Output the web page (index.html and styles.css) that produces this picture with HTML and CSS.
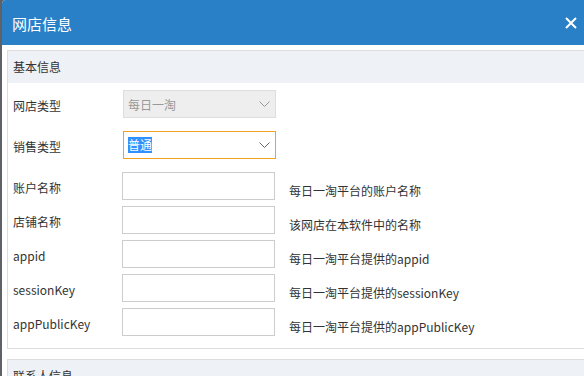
FILE: index.html
```html
<!DOCTYPE html>
<html lang="zh-CN">
<head>
    <meta charset="UTF-8">
    <title>网店信息</title>
    <link rel="stylesheet" href="styles.css">
</head>
<body>
    <div class="dialog">
        <div class="dialog-header">
            <h1>网店信息</h1>
            <span class="close">
                <svg width="12" height="12" viewBox="0 0 12 12">
                    <path d="M1 1 L11 11 M11 1 L1 11" stroke="#fff" stroke-width="2" fill="none"/>
                </svg>
            </span>
        </div>
        <div class="dialog-body">
            <div class="panel">
                <div class="panel-title">基本信息</div>
                <div class="panel-body">
                    <div class="row row-select">
                        <label>网店类型</label>
                        <div class="combo disabled">
                            <span>每日一淘</span>
                            <svg class="arrow" width="11" height="7" viewBox="0 0 11 7">
                                <path d="M0.5 0.5 L5.5 5.5 L10.5 0.5" stroke="#999" stroke-width="1" fill="none"/>
                            </svg>
                        </div>
                    </div>
                    <div class="row row-select">
                        <label>销售类型</label>
                        <div class="combo focused">
                            <span class="selected">普通</span>
                            <svg class="arrow" width="11" height="7" viewBox="0 0 11 7">
                                <path d="M0.5 0.5 L5.5 5.5 L10.5 0.5" stroke="#666" stroke-width="1" fill="none"/>
                            </svg>
                        </div>
                    </div>
                    <div class="row">
                        <label>账户名称</label>
                        <input type="text">
                        <span class="hint">每日一淘平台的账户名称</span>
                    </div>
                    <div class="row">
                        <label>店铺名称</label>
                        <input type="text">
                        <span class="hint">该网店在本软件中的名称</span>
                    </div>
                    <div class="row">
                        <label>appid</label>
                        <input type="text">
                        <span class="hint">每日一淘平台提供的appid</span>
                    </div>
                    <div class="row">
                        <label>sessionKey</label>
                        <input type="text">
                        <span class="hint">每日一淘平台提供的sessionKey</span>
                    </div>
                    <div class="row">
                        <label>appPublicKey</label>
                        <input type="text">
                        <span class="hint">每日一淘平台提供的appPublicKey</span>
                    </div>
                </div>
            </div>
            <div class="panel">
                <div class="panel-title">联系人信息</div>
            </div>
        </div>
    </div>
</body>
</html>
```

FILE: styles.css
```css
* {
    margin: 0;
    padding: 0;
    box-sizing: border-box;
}

body {
    background: #5e6166;
    font-family: "Noto Sans CJK SC", "Noto Sans", sans-serif;
    font-size: 12px;
    color: #333;
    overflow: hidden;
    height: 376px;
}

.dialog {
    margin-left: 2px;
    background: #fff;
    border-top-left-radius: 4px;
    height: 376px;
    overflow: hidden;
}

.dialog-header {
    background: #2a80c6;
    height: 45px;
    display: flex;
    align-items: center;
    justify-content: space-between;
    padding: 2px 7px 0 10px;
    color: #fff;
}

.dialog-header h1 {
    font-size: 15px;
    font-weight: normal;
}

.close {
    display: flex;
    margin-top: -2px;
}

.dialog-body {
    padding: 5px 0 0 5px;
}

.panel {
    border: 1px solid #ddd;
    margin-right: -10px;
    margin-bottom: 10px;
}

.panel-title {
    background: #eef1f5;
    height: 32px;
    line-height: 32px;
    padding-left: 5px;
    font-size: 12px;
}

.panel-body {
    padding: 7px 0 12px 5px;
}

.row {
    display: flex;
    align-items: center;
    height: 28px;
    margin-bottom: 6px;
}

.row:last-child {
    margin-bottom: 0;
}

.row-select {
    margin-bottom: 13px;
}

.row label {
    width: 109px;
    margin-top: 3px;
}

.combo {
    width: 153px;
    height: 28px;
    margin-left: 1px;
    display: flex;
    align-items: center;
    justify-content: space-between;
    padding: 0 4px 0 4px;
}

.combo.disabled {
    background: #eee;
    border: 1px solid #ddd;
    color: #999;
}

.combo.focused {
    border: 1px solid #f0a222;
}

.combo .arrow {
    margin-right: 1px;
    margin-top: 1px;
}

.selected {
    background: #3390ff;
    color: #fff;
    line-height: 16px;
}

.row input {
    width: 153px;
    height: 28px;
    border: 1px solid #ccc;
    outline: none;
}

.hint {
    margin-left: 14px;
    margin-top: 8px;
}
```
